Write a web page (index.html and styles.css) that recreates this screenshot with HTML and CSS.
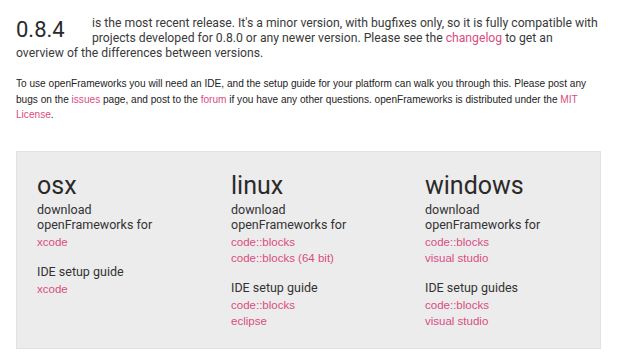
FILE: index.html
```html
<!DOCTYPE html>
<html>
<head>
<meta charset="utf-8">
<link rel="stylesheet" href="styles.css">
</head>
<body>
<div class="page">
  <p class="intro"><span class="version">0.8.4</span>is the most recent release. It's a minor version, with bugfixes only, so it is fully compatible with projects developed for 0.8.0 or any newer version. Please see the <a href="#">changelog</a> to get an overview of the differences between versions.</p>
  <p class="note">To use openFrameworks you will need an IDE, and the setup guide for your platform can walk you through this. Please post any bugs on the <a href="#">issues</a> page, and post to the <a href="#">forum</a> if you have any other questions. openFrameworks is distributed under the <a href="#">MIT License</a>.</p>
  <div class="box">
    <div class="col">
      <h2>osx</h2>
      <div class="label">download<br>openFrameworks for</div>
      <ul class="links"><li><a href="#">xcode</a></li></ul>
      <div class="label">IDE setup guide</div>
      <ul class="links"><li><a href="#">xcode</a></li></ul>
    </div>
    <div class="col">
      <h2>linux</h2>
      <div class="label">download<br>openFrameworks for</div>
      <ul class="links"><li><a href="#">code::blocks</a></li><li><a href="#">code::blocks (64 bit)</a></li></ul>
      <div class="label">IDE setup guide</div>
      <ul class="links"><li><a href="#">code::blocks</a></li><li><a href="#">eclipse</a></li></ul>
    </div>
    <div class="col">
      <h2>windows</h2>
      <div class="label">download<br>openFrameworks for</div>
      <ul class="links"><li><a href="#">code::blocks</a></li><li><a href="#">visual studio</a></li></ul>
      <div class="label">IDE setup guides</div>
      <ul class="links"><li><a href="#">code::blocks</a></li><li><a href="#">visual studio</a></li></ul>
    </div>
  </div>
</div>
</body>
</html>
```
FILE: styles.css
```css
html, body {
  margin: 0;
  padding: 0;
  background: #fff;
}
.page {
  padding: 16px 19px 0 16px;
  color: #333;
}
a {
  color: #d94c82;
  text-decoration: none;
}
.intro {
  margin: 0;
  font-family: Roboto, "Open Sans", sans-serif;
  font-size: 12.2px;
  line-height: 15px;
  color: #3a3a3a;
}
.version {
  float: left;
  width: 76px;
  font-size: 22px;
  line-height: 27px;
  color: #2a2a2a;
}
.note {
  margin: 15px 0 0;
  font-family: "Liberation Sans", Arial, sans-serif;
  font-size: 10.1px;
  line-height: 15.5px;
  color: #222;
}
.box {
  margin-top: 28px;
  background: #ececec;
  border: 1px solid #e2e2e2;
  box-shadow: 0 1px 0 #f4f4f4;
  padding: 20px 0 19px 20px;
  display: grid;
  grid-template-columns: 194px 194px 1fr;
}
.col h2 {
  margin: 0;
  font-family: Roboto, "Open Sans", sans-serif;
  font-weight: 400;
  font-size: 25px;
  line-height: 28px;
  color: #2a2a2a;
}
.label {
  font-family: Roboto, "Open Sans", sans-serif;
  font-size: 12.5px;
  line-height: 15px;
  color: #333;
  margin-top: 2px;
}
.links {
  list-style: none;
  margin: 2px 0 14px;
  padding: 0;
  font-family: "Liberation Sans", Arial, sans-serif;
  font-size: 11.5px;
  line-height: 16px;
}
.links:last-child {
  margin-bottom: 0;
}
```
